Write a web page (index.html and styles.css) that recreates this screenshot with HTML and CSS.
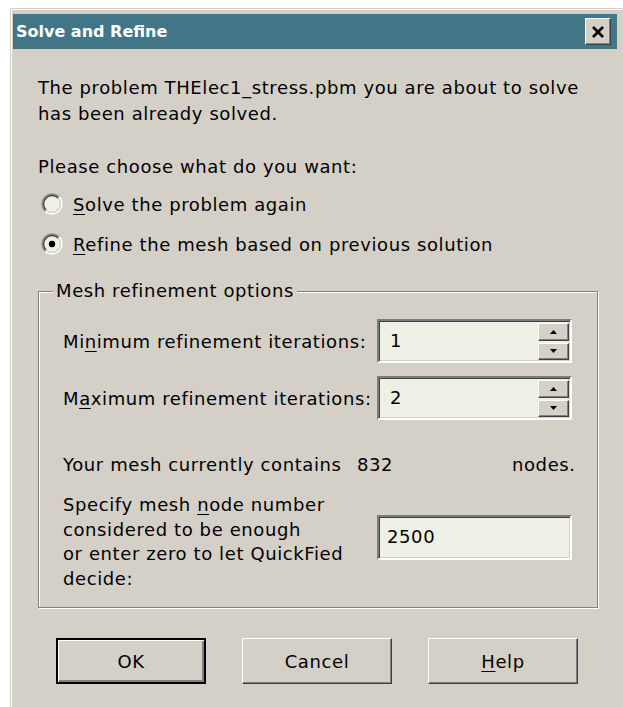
FILE: index.html
```html
<!DOCTYPE html>
<html lang="en">
<head>
<meta charset="utf-8">
<title>Solve and Refine</title>
<link rel="stylesheet" href="styles.css">
</head>
<body>
<div class="window">
  <div class="titlebar">
    <span class="title">Solve and Refine</span>
    <button class="close" type="button" aria-label="Close">
      <svg width="14" height="12" viewBox="0 0 14 12"><path d="M2 1 L12 11 M12 1 L2 11" stroke="#000" stroke-width="2.6" fill="none"/></svg>
    </button>
  </div>
  <div class="content">
    <p class="intro">The problem THElec1_stress.pbm you are about to solve<br>has been already solved.</p>
    <p class="prompt">Please choose what do you want:</p>

    <label class="radio first">
      <svg class="radio-mark" width="22" height="22" viewBox="0 0 22 22">
        <circle cx="11" cy="11" r="9" fill="#eef0e6"/>
        <path d="M3.93 18.07 A10 10 0 0 1 18.07 3.93" stroke="#8a8a8a" stroke-width="1.6" fill="none"/>
        <path d="M18.07 3.93 A10 10 0 0 1 3.93 18.07" stroke="#ffffff" stroke-width="1.6" fill="none"/>
        <path d="M4.99 17.01 A8.5 8.5 0 0 1 17.01 4.99" stroke="#404040" stroke-width="1.4" fill="none"/>
        <path d="M17.01 4.99 A8.5 8.5 0 0 1 4.99 17.01" stroke="#d4d0c8" stroke-width="1.4" fill="none"/>
      </svg>
      <span><u>S</u>olve the problem again</span>
    </label>

    <label class="radio second">
      <svg class="radio-mark" width="22" height="22" viewBox="0 0 22 22">
        <circle cx="11" cy="11" r="9" fill="#eef0e6"/>
        <path d="M3.93 18.07 A10 10 0 0 1 18.07 3.93" stroke="#8a8a8a" stroke-width="1.6" fill="none"/>
        <path d="M18.07 3.93 A10 10 0 0 1 3.93 18.07" stroke="#ffffff" stroke-width="1.6" fill="none"/>
        <path d="M4.99 17.01 A8.5 8.5 0 0 1 17.01 4.99" stroke="#404040" stroke-width="1.4" fill="none"/>
        <path d="M17.01 4.99 A8.5 8.5 0 0 1 4.99 17.01" stroke="#d4d0c8" stroke-width="1.4" fill="none"/>
        <circle cx="11" cy="11" r="3.2" fill="#000"/>
      </svg>
      <span><u>R</u>efine the mesh based on previous solution</span>
    </label>

    <fieldset class="group">
      <legend>Mesh refinement options</legend>

      <div class="field-row first-row">
        <span class="label">Mi<u>n</u>imum refinement iterations:</span>
        <div class="spin">
          <span class="spin-value">1</span>
          <div class="spin-buttons">
            <span class="spin-btn"><svg width="7" height="4" viewBox="0 0 7 4"><path d="M0 4 L3.5 0 L7 4 Z" fill="#000"/></svg></span>
            <span class="spin-btn"><svg width="7" height="4" viewBox="0 0 7 4"><path d="M0 0 L7 0 L3.5 4 Z" fill="#000"/></svg></span>
          </div>
        </div>
      </div>

      <div class="field-row second-row">
        <span class="label">M<u>a</u>ximum refinement iterations:</span>
        <div class="spin">
          <span class="spin-value">2</span>
          <div class="spin-buttons">
            <span class="spin-btn"><svg width="7" height="4" viewBox="0 0 7 4"><path d="M0 4 L3.5 0 L7 4 Z" fill="#000"/></svg></span>
            <span class="spin-btn"><svg width="7" height="4" viewBox="0 0 7 4"><path d="M0 0 L7 0 L3.5 4 Z" fill="#000"/></svg></span>
          </div>
        </div>
      </div>

      <div class="count-row">
        <span>Your mesh currently contains</span>
        <span class="count">832</span>
        <span class="unit">nodes.</span>
      </div>

      <div class="node-row">
        <span class="label multi">Specify mesh <u>n</u>ode number<br>considered to be enough<br>or enter zero to let QuickFied<br>decide:</span>
        <div class="textbox">2500</div>
      </div>
    </fieldset>

    <div class="buttons">
      <button class="btn default" type="button">OK</button>
      <button class="btn" type="button">Cancel</button>
      <button class="btn" type="button"><u>H</u>elp</button>
    </div>
  </div>
</div>
</body>
</html>
```

FILE: styles.css
```css
html, body {
  margin: 0;
  padding: 0;
  background: #ffffff;
}

body {
  font-family: "DejaVu Sans", "Verdana", sans-serif;
  font-size: 18px;
  letter-spacing: 0.6px;
  color: #000;
  overflow: hidden;
}

u {
  text-underline-offset: 3px;
  text-decoration-thickness: 1px;
}

/* Dialog frame */
.window {
  box-sizing: border-box;
  width: 613px;
  height: 700px;
  margin: 8px 0 0 10px;
  padding: 5px 6px 0 2px;
  background: #d4d0c8;
  border-top: 1px solid #d4d0c8;
  border-left: 1px solid #d4d0c8;
  box-shadow: inset 1px 1px 0 #ffffff;
}

.titlebar {
  height: 35px;
  box-sizing: border-box;
  padding: 0 6px 0 3px;
  background: #427686;
  display: flex;
  align-items: center;
  justify-content: space-between;
}

.title {
  color: #fff;
  font-weight: bold;
  font-size: 16px;
  letter-spacing: 0;
}

.close {
  width: 26px;
  height: 27px;
  padding: 0;
  margin: 0;
  background: #d4d0c8;
  border: 1px solid;
  border-color: #ffffff #404040 #404040 #ffffff;
  box-shadow: inset -1px -1px 0 #808080;
  display: flex;
  align-items: center;
  justify-content: center;
}

/* Dialog body */
.content {
  padding-left: 25px;
}

.intro {
  margin: 26px 0 0;
  line-height: 26px;
}

.prompt {
  margin: 27px 0 0;
  line-height: 26px;
}

.radio {
  display: flex;
  align-items: center;
  height: 26px;
  padding-left: 3px;
  gap: 10px;
}

.radio.first {
  margin-top: 11px;
}

.radio.second {
  margin-top: 14px;
}

.radio-mark {
  flex: 0 0 auto;
}

/* Group box */
.group {
  box-sizing: border-box;
  width: 560px;
  margin: 22px 0 0;
  padding: 0 0 16px 24px;
  border: 1px solid #808080;
  box-shadow: inset 1px 1px 0 #ffffff, 1px 1px 0 #ffffff;
  min-inline-size: 0;
}

.group legend {
  margin-left: -10px;
  padding: 0 3px;
  line-height: 24px;
  background: #d4d0c8;
}

.field-row {
  display: grid;
  grid-template-columns: 314px 195px;
  align-items: center;
  height: 44px;
}

.first-row {
  margin-top: 16px;
}

.second-row {
  margin-top: 13px;
}

.label {
  line-height: 25px;
}

/* Sunken edit fields */
.spin,
.textbox {
  box-sizing: border-box;
  background: #eef0e6;
  border: 2px solid;
  border-color: #7c7c7c #ffffff #ffffff #7c7c7c;
  box-shadow: inset 1px 1px 0 #404040, inset -1px -1px 0 #d4d0c8;
}

.spin {
  height: 44px;
  width: 195px;
  display: flex;
  align-items: stretch;
  justify-content: space-between;
  padding: 2px 1px 1px 0;
}

.spin-value {
  padding-left: 11px;
  line-height: 36px;
}

.spin-buttons {
  width: 31px;
  display: flex;
  flex-direction: column;
  gap: 2px;
}

.spin-btn {
  flex: 1;
  box-sizing: border-box;
  background: #d4d0c8;
  border: 1px solid;
  border-color: #ffffff #404040 #404040 #ffffff;
  box-shadow: inset -1px -1px 0 #808080;
  display: flex;
  align-items: center;
  justify-content: center;
}

.count-row {
  display: grid;
  grid-template-columns: 294px 155px auto;
  line-height: 25px;
  margin-top: 32px;
}

.node-row {
  display: grid;
  grid-template-columns: 314px 195px;
  align-items: start;
  margin-top: 16px;
}

.label.multi {
  line-height: 24.5px;
}

.textbox {
  height: 45px;
  margin-top: 22px;
  padding-left: 8px;
  line-height: 39px;
}

/* Command buttons */
.buttons {
  display: flex;
  gap: 36px;
  margin: 30px 0 0 18px;
}

.btn {
  box-sizing: border-box;
  width: 150px;
  height: 46px;
  font: inherit;
  letter-spacing: inherit;
  color: #000;
  background: #d4d0c8;
  border: 1px solid;
  border-color: #ffffff #404040 #404040 #ffffff;
  box-shadow: inset -1px -1px 0 #808080;
  padding: 0;
}

.btn.default {
  border: 2px solid #000;
  box-shadow: inset 1px 1px 0 #ffffff, inset -2px -2px 0 #808080;
}
```
